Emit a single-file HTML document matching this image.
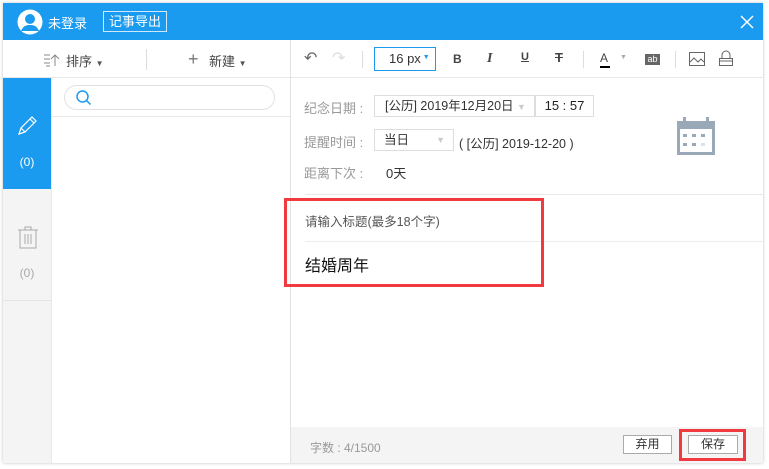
<!DOCTYPE html>
<html><head><meta charset="utf-8"><style>
*{margin:0;padding:0;box-sizing:border-box}
body{width:769px;height:469px;background:#fff;position:relative;overflow:hidden;font-family:"Liberation Sans","Noto Sans CJK SC",sans-serif;font-size:12px;color:#333}
.a{position:absolute}
</style></head><body>
<div class="a" style="left:3px;top:3px;width:760px;height:460px;background:#fff;box-shadow:0 0 3px rgba(0,0,0,.25)"></div>
<!-- title bar -->
<div class="a" style="left:3px;top:3px;width:760px;height:37px;background:#1a9bf0"></div>
<svg class="a" style="left:17px;top:9px" width="26" height="26" viewBox="0 0 26 26"><circle cx="13" cy="13" r="12.5" fill="#fff"/><circle cx="13" cy="10" r="5" fill="#1a9bf0"/><path d="M4 22c2-5 5-6 9-6s7 1 9 6z" fill="#1a9bf0"/></svg>
<div class="a" style="left:48px;top:13px;color:#fff;font-size:13px">未登录</div>
<div class="a" style="left:103px;top:11px;width:64px;height:21px;border:1px solid #cfe8fb;color:#fff;font-size:13px;line-height:19px;text-align:center">记事导出</div>
<svg class="a" style="left:740px;top:15px" width="14" height="14"><path d="M1 1L13 13M13 1L1 13" stroke="#fff" stroke-width="1.5"/></svg>
<!-- left toolbar -->
<div class="a" style="left:3px;top:40px;width:287px;height:38px;border-bottom:1px solid #e8e8e8"></div>
<svg class="a" style="left:44px;top:53px" width="16" height="14"><path d="M0 2h6M0 6h6M0 10h6M2 13h4M11 13V2M7 6l4-4 4 4" stroke="#888" fill="none"/></svg>
<div class="a" style="left:66px;top:51px;font-size:13px;color:#444">排序 <span style="font-size:8px;color:#555">▼</span></div>
<div class="a" style="left:146px;top:49px;width:1px;height:21px;background:#ddd"></div>
<div class="a" style="left:188px;top:49px;font-size:18px;color:#777;font-weight:300">+</div>
<div class="a" style="left:209px;top:51px;font-size:13px;color:#444">新建 <span style="font-size:8px;color:#555">▼</span></div>
<!-- sidebar -->
<div class="a" style="left:3px;top:78px;width:49px;height:385px;background:#f4f4f4;border-right:1px solid #e8e8e8"></div>
<div class="a" style="left:3px;top:78px;width:48px;height:111px;background:#1a9bf0"></div>
<svg class="a" style="left:17px;top:114px" width="22" height="22"><path d="M2 20l2-6L15 3l4 4L8 18z M4 14l4 4 M13 5l4 4" stroke="#fff" fill="none" stroke-width="1.2"/></svg>
<div class="a" style="left:3px;top:155px;width:48px;text-align:center;color:#fff;font-size:12px">(0)</div>
<svg class="a" style="left:17px;top:225px" width="22" height="24"><path d="M1 5h20M8 5V2h6v3M3 5v18h16V5M8 9v10M11 9v10M14 9v10" stroke="#aaa" fill="none"/></svg>
<div class="a" style="left:3px;top:266px;width:48px;text-align:center;color:#aaa;font-size:12px">(0)</div>
<div class="a" style="left:3px;top:300px;width:49px;height:1px;background:#e4e4e4"></div>
<!-- search -->
<div class="a" style="left:64px;top:85px;width:211px;height:25px;border:1px solid #e2e2e2;border-radius:13px"></div>
<svg class="a" style="left:75px;top:89px" width="18" height="18"><circle cx="7.5" cy="7.5" r="5.5" stroke="#1a9bf0" stroke-width="1.5" fill="none"/><path d="M11.5 11.5l4 4" stroke="#1a9bf0" stroke-width="1.5"/></svg>
<div class="a" style="left:52px;top:116px;width:238px;height:1px;background:#e8e8e8"></div>
<div class="a" style="left:290px;top:40px;width:1px;height:423px;background:#e2e2e2"></div>
<!-- editor toolbar -->
<div class="a" style="left:291px;top:77px;width:472px;height:1px;background:#e8e8e8"></div>
<div class="a" style="left:304px;top:48px;font-size:16px;color:#666">↶</div>
<div class="a" style="left:332px;top:48px;font-size:16px;color:#ddd">↷</div>
<div class="a" style="left:362px;top:51px;width:1px;height:17px;background:#ddd"></div>
<div class="a" style="left:374px;top:47px;width:62px;height:24px;border:1px solid #1a9bf0;font-size:13px;line-height:22px;padding-left:14px;color:#333">16 px<span style="font-size:7px;color:#1a9bf0;position:relative;top:-4px"> ▼</span></div>
<div class="a" style="left:453px;top:52px;font-weight:bold;font-size:12px;color:#444">B</div>
<div class="a" style="left:487px;top:51px;font-style:italic;font-family:'Liberation Serif',serif;font-size:14px;color:#444;font-weight:bold">I</div>
<div class="a" style="left:521px;top:51px;font-size:11px;color:#444;text-decoration:underline;font-weight:bold">U</div>
<div class="a" style="left:555px;top:50px;font-size:13px;color:#444;text-decoration:line-through;font-weight:bold">T</div>
<div class="a" style="left:583px;top:51px;width:1px;height:17px;background:#ddd"></div>
<div class="a" style="left:600px;top:51px;font-size:12px;color:#444">A</div>
<div class="a" style="left:600px;top:66px;width:10px;height:2px;background:#000"></div>
<div class="a" style="left:620px;top:54px;font-size:7px;color:#aaa">▼</div>
<div class="a" style="left:645px;top:54px;width:15px;height:11px;background:#666;color:#fff;font-size:9px;line-height:11px;text-align:center">ab</div>
<div class="a" style="left:675px;top:51px;width:1px;height:17px;background:#ddd"></div>
<svg class="a" style="left:689px;top:52px" width="16" height="14"><rect x=".5" y=".5" width="15" height="13" fill="none" stroke="#666"/><path d="M1 10l4-4 4 4 3-3 3 3" stroke="#666" fill="none"/></svg>
<svg class="a" style="left:719px;top:50px" width="14" height="16"><path d="M3 8V5a4 4 0 0 1 8 0v3" stroke="#666" fill="none"/><rect x=".5" y="8.5" width="13" height="7" fill="none" stroke="#666"/><path d="M1 11h12" stroke="#666"/></svg>
<!-- fields -->
<div class="a" style="left:304px;top:98px;color:#999;font-size:13px">纪念日期 :</div>
<div class="a" style="left:374px;top:95px;width:161px;height:22px;border:1px solid #ddd;font-size:12.5px;line-height:20px;padding-left:10px;color:#333">[公历] 2019年12月20日 <span style="color:#ccc;font-size:9px">▼</span></div>
<div class="a" style="left:535px;top:95px;width:59px;height:22px;border:1px solid #ddd;font-size:13px;line-height:20px;text-align:center;color:#222">15 : 57</div>
<div class="a" style="left:304px;top:132px;color:#999;font-size:13px">提醒时间 :</div>
<div class="a" style="left:374px;top:129px;width:80px;height:22px;border:1px solid #ddd;font-size:12.5px;line-height:20px;padding-left:9px;color:#333">当日<span style="position:absolute;right:8px;color:#ccc;font-size:9px">▼</span></div>
<div class="a" style="left:459px;top:133px;font-size:12.5px;color:#333">( [公历] 2019-12-20 )</div>
<div class="a" style="left:304px;top:163px;color:#999;font-size:13px">距离下次 :</div>
<div class="a" style="left:386px;top:163px;font-size:13px;color:#333">0天</div>
<svg class="a" style="left:676px;top:116px" width="40" height="40"><rect x="1" y="5" width="38" height="34" fill="#9aa9b8"/><rect x="4" y="13" width="32" height="23" fill="#fff"/><rect x="7" y="1" width="3" height="6" fill="#9aa9b8"/><rect x="30" y="1" width="3" height="6" fill="#9aa9b8"/><g fill="#9aa9b8"><rect x="7" y="18" width="4" height="3"/><rect x="16" y="18" width="4" height="3"/><rect x="25" y="18" width="4" height="3"/><rect x="7" y="27" width="4" height="3"/><rect x="16" y="27" width="4" height="3"/></g><rect x="25" y="27" width="4" height="3" fill="#dde3ea"/></svg>
<!-- title area -->
<div class="a" style="left:305px;top:194px;width:458px;height:1px;background:#e8e8e8"></div>
<div class="a" style="left:305px;top:211px;font-size:12.5px;color:#555">请输入标题(最多18个字)</div>
<div class="a" style="left:305px;top:241px;width:458px;height:1px;background:#ececec"></div>
<div class="a" style="left:305px;top:252px;font-size:16px;color:#111">结婚周年</div>
<div class="a" style="left:284px;top:198px;width:260px;height:89px;border:3px solid #f03a3f"></div>
<!-- footer -->
<div class="a" style="left:291px;top:427px;width:472px;height:36px;background:#f4f4f4"></div>
<div class="a" style="left:310px;top:439px;font-size:12px;color:#999">字数 : 4/1500</div>
<div class="a" style="left:623px;top:435px;width:49px;height:19px;border:1px solid #aaa;background:#fff;text-align:center;line-height:17px;font-size:12px">弃用</div>
<div class="a" style="left:688px;top:435px;width:50px;height:19px;border:1px solid #aaa;background:#fff;text-align:center;line-height:17px;font-size:12px">保存</div>
<div class="a" style="left:679px;top:429px;width:67px;height:32px;border:3px solid #f03a3f"></div>
</body></html>
